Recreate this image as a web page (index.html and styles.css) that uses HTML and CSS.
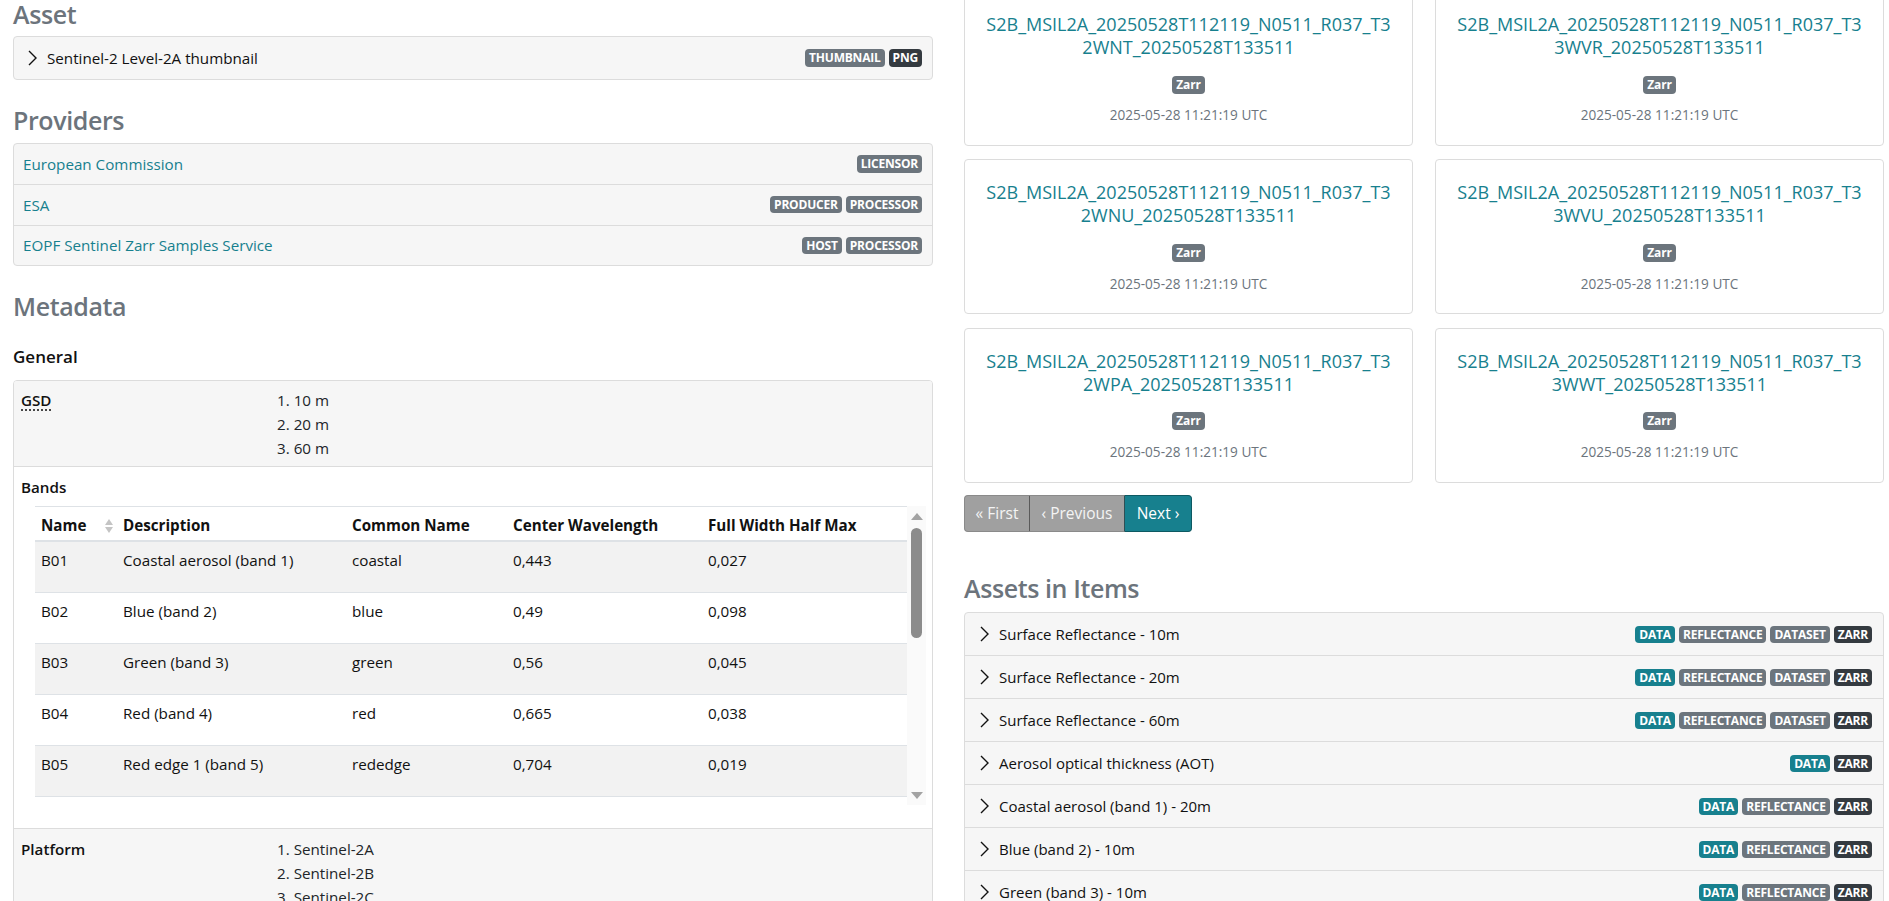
FILE: index.html
```html
<!DOCTYPE html>
<html lang="en">
<head>
<meta charset="utf-8">
<title>Collection</title>
<link rel="stylesheet" href="styles.css">
</head>
<body>
<div class="page">
  <section class="col">
    <h3 class="sec-title first">Asset</h3>
    <div class="list-box">
      <div class="list-row asset-row">
        <svg class="chev" viewBox="0 0 9 16" width="9" height="16"><polyline points="1,1 8,8 1,15" /></svg>
        <span class="row-title">Sentinel-2 Level-2A thumbnail</span>
        <span class="badges"><span class="badge secondary">thumbnail</span><span class="badge dark">png</span></span>
      </div>
    </div>

    <h3 class="sec-title">Providers</h3>
    <div class="list-box">
      <div class="list-row prov-row"><a class="link" href="#">European Commission</a><span class="badges"><span class="badge secondary">licensor</span></span></div>
      <div class="list-row prov-row"><a class="link" href="#">ESA</a><span class="badges"><span class="badge secondary">producer</span><span class="badge secondary">processor</span></span></div>
      <div class="list-row prov-row"><a class="link" href="#">EOPF Sentinel Zarr Samples Service</a><span class="badges"><span class="badge secondary">host</span><span class="badge secondary">processor</span></span></div>
    </div>

    <h3 class="sec-title">Metadata</h3>
    <h4 class="sub-title">General</h4>
    <div class="meta-box">
      <div class="meta-row shade">
        <div class="meta-label"><abbr title="Ground Sample Distance">GSD</abbr></div>
        <ol class="meta-list"><li>10 m</li><li>20 m</li><li>60 m</li></ol>
      </div>
      <div class="meta-row bands">
        <div class="meta-label">Bands</div>
        <div class="table-wrap">
          <div class="table-clip">
            <table class="bands-table">
              <colgroup><col class="c-name"><col class="c-desc"><col class="c-common"><col class="c-center"><col></colgroup>
              <thead>
                <tr><th><span class="th-name">Name</span><span class="sort"><i class="up"></i><i class="down"></i></span></th><th>Description</th><th>Common Name</th><th>Center Wavelength</th><th>Full Width Half Max</th></tr>
              </thead>
              <tbody>
                <tr><td>B01</td><td>Coastal aerosol (band 1)</td><td>coastal</td><td>0,443</td><td>0,027</td></tr>
                <tr><td>B02</td><td>Blue (band 2)</td><td>blue</td><td>0,49</td><td>0,098</td></tr>
                <tr><td>B03</td><td>Green (band 3)</td><td>green</td><td>0,56</td><td>0,045</td></tr>
                <tr><td>B04</td><td>Red (band 4)</td><td>red</td><td>0,665</td><td>0,038</td></tr>
                <tr><td>B05</td><td>Red edge 1 (band 5)</td><td>rededge</td><td>0,704</td><td>0,019</td></tr>
              </tbody>
            </table>
          </div>
          <div class="vscroll" aria-hidden="true">
            <span class="arrow up"></span>
            <span class="track"><span class="thumb"></span></span>
            <span class="arrow down"></span>
          </div>
        </div>
      </div>
      <div class="meta-row shade">
        <div class="meta-label">Platform</div>
        <ol class="meta-list"><li>Sentinel-2A</li><li>Sentinel-2B</li><li>Sentinel-2C</li></ol>
      </div>
    </div>
  </section>

  <section class="col">
    <div class="cards">
      <div class="card"><a class="card-title" href="#">S2B_MSIL2A_20250528T112119_N0511_R037_T3<wbr>2WNT_20250528T133511</a><div class="card-badge"><span class="badge secondary plain">Zarr</span></div><div class="card-date">2025-05-28 11:21:19 UTC</div></div>
      <div class="card"><a class="card-title" href="#">S2B_MSIL2A_20250528T112119_N0511_R037_T3<wbr>3WVR_20250528T133511</a><div class="card-badge"><span class="badge secondary plain">Zarr</span></div><div class="card-date">2025-05-28 11:21:19 UTC</div></div>
      <div class="card"><a class="card-title" href="#">S2B_MSIL2A_20250528T112119_N0511_R037_T3<wbr>2WNU_20250528T133511</a><div class="card-badge"><span class="badge secondary plain">Zarr</span></div><div class="card-date">2025-05-28 11:21:19 UTC</div></div>
      <div class="card"><a class="card-title" href="#">S2B_MSIL2A_20250528T112119_N0511_R037_T3<wbr>3WVU_20250528T133511</a><div class="card-badge"><span class="badge secondary plain">Zarr</span></div><div class="card-date">2025-05-28 11:21:19 UTC</div></div>
      <div class="card"><a class="card-title" href="#">S2B_MSIL2A_20250528T112119_N0511_R037_T3<wbr>2WPA_20250528T133511</a><div class="card-badge"><span class="badge secondary plain">Zarr</span></div><div class="card-date">2025-05-28 11:21:19 UTC</div></div>
      <div class="card"><a class="card-title" href="#">S2B_MSIL2A_20250528T112119_N0511_R037_T3<wbr>3WWT_20250528T133511</a><div class="card-badge"><span class="badge secondary plain">Zarr</span></div><div class="card-date">2025-05-28 11:21:19 UTC</div></div>
    </div>

    <nav class="pager">
      <span class="pg pg-first disabled">« First</span>
      <span class="pg pg-prev disabled">‹ Previous</span>
      <a class="pg pg-next" href="#">Next ›</a>
    </nav>

    <h3 class="sec-title assets-title">Assets in Items</h3>
    <div class="list-box">
      <div class="list-row item-row"><svg class="chev" viewBox="0 0 9 16" width="9" height="16"><polyline points="1,1 8,8 1,15" /></svg><span class="row-title">Surface Reflectance - 10m</span><span class="badges"><span class="badge teal">data</span><span class="badge secondary">reflectance</span><span class="badge secondary">dataset</span><span class="badge dark">zarr</span></span></div>
      <div class="list-row item-row"><svg class="chev" viewBox="0 0 9 16" width="9" height="16"><polyline points="1,1 8,8 1,15" /></svg><span class="row-title">Surface Reflectance - 20m</span><span class="badges"><span class="badge teal">data</span><span class="badge secondary">reflectance</span><span class="badge secondary">dataset</span><span class="badge dark">zarr</span></span></div>
      <div class="list-row item-row"><svg class="chev" viewBox="0 0 9 16" width="9" height="16"><polyline points="1,1 8,8 1,15" /></svg><span class="row-title">Surface Reflectance - 60m</span><span class="badges"><span class="badge teal">data</span><span class="badge secondary">reflectance</span><span class="badge secondary">dataset</span><span class="badge dark">zarr</span></span></div>
      <div class="list-row item-row"><svg class="chev" viewBox="0 0 9 16" width="9" height="16"><polyline points="1,1 8,8 1,15" /></svg><span class="row-title">Aerosol optical thickness (AOT)</span><span class="badges"><span class="badge teal">data</span><span class="badge dark">zarr</span></span></div>
      <div class="list-row item-row"><svg class="chev" viewBox="0 0 9 16" width="9" height="16"><polyline points="1,1 8,8 1,15" /></svg><span class="row-title">Coastal aerosol (band 1) - 20m</span><span class="badges"><span class="badge teal">data</span><span class="badge secondary">reflectance</span><span class="badge dark">zarr</span></span></div>
      <div class="list-row item-row"><svg class="chev" viewBox="0 0 9 16" width="9" height="16"><polyline points="1,1 8,8 1,15" /></svg><span class="row-title">Blue (band 2) - 10m</span><span class="badges"><span class="badge teal">data</span><span class="badge secondary">reflectance</span><span class="badge dark">zarr</span></span></div>
      <div class="list-row item-row"><svg class="chev" viewBox="0 0 9 16" width="9" height="16"><polyline points="1,1 8,8 1,15" /></svg><span class="row-title">Green (band 3) - 10m</span><span class="badges"><span class="badge teal">data</span><span class="badge secondary">reflectance</span><span class="badge dark">zarr</span></span></div>
    </div>
  </section>
</div>
</body>
</html>
```

FILE: styles.css
```css
:root {
  --teal: #17808e;
  --gray: #6c757d;
  --dark: #343a40;
  --border: #dcdcdc;
  --font: "Open Sans", "Noto Sans", "DejaVu Sans", sans-serif;
}

html, body {
  margin: 0;
  padding: 0;
  overflow: hidden;
  background: #fff;
}

body {
  font-family: var(--font);
  font-size: 15.2px;
  line-height: 24px;
  color: #212529;
  height: 901px;
}

.page {
  display: grid;
  grid-template-columns: 1fr 1fr;
  column-gap: 31px;
  padding: 0 5px 0 13px;
  align-items: start;
}

.col {
  min-width: 0;
}

.sec-title {
  font-size: 25px;
  font-weight: 600;
  letter-spacing: -0.4px;
  line-height: 30px;
  color: #6c747c;
  margin: 25px 0 8.7px;
}

.sec-title.first {
  margin-top: -1.5px;
  margin-bottom: 7.5px;
}

.sub-title {
  font-size: 17px;
  font-weight: 600;
  line-height: 20px;
  margin: 26px 0 12.6px;
  color: #111;
}

.link {
  color: var(--teal);
  text-decoration: none;
}

/* list boxes */
.list-box {
  border: 1px solid var(--border);
  border-radius: 4px;
  background: #f6f6f6;
  overflow: hidden;
}

.list-row {
  display: flex;
  align-items: center;
  border-top: 1px solid var(--border);
  padding: 0 10px 0 9px;
}

.list-row:first-child {
  border-top: 0;
}

.asset-row {
  height: 41.5px;
  padding-left: 14px;
}

.prov-row {
  height: 39.67px;
}

.item-row {
  height: 42px;
  padding-left: 15px;
  padding-right: 11px;
  font-size: 15px;
}

.chev {
  flex: none;
  fill: none;
  stroke: #111;
  stroke-width: 1.4;
  margin-right: 10px;
}

.row-title {
  color: #111;
}

.badges {
  margin-left: auto;
  display: flex;
  gap: 4px;
}

.badge {
  display: inline-block;
  font-size: 12px;
  font-weight: 700;
  line-height: 12px;
  padding: 3px 4px 2.5px;
  border-radius: 4px;
  color: #fff;
  text-transform: uppercase;
  letter-spacing: -0.2px;
}

.badge.plain {
  text-transform: none;
}

.badge.secondary { background: var(--gray); }
.badge.dark { background: var(--dark); }
.badge.teal { background: var(--teal); }

/* metadata */
.meta-box {
  border: 1px solid var(--border);
  border-radius: 4px;
  overflow: hidden;
}

.meta-row {
  display: grid;
  grid-template-columns: 256px 1fr;
  padding: 7.4px 6px 6.3px 7px;
  border-top: 1px solid var(--border);
}

.meta-row:first-child {
  border-top: 0;
}

.meta-row.shade {
  background: #f6f6f6;
}

.meta-label {
  font-weight: 600;
  color: #111;
}

abbr {
  text-decoration: underline dotted;
  text-underline-offset: 4px;
}

.meta-list {
  margin: 0;
  padding: 0;
  list-style-position: inside;
}

.meta-row.bands {
  grid-template-columns: 1fr;
  padding-bottom: 23.3px;
}

.table-wrap {
  display: flex;
  margin: 7.3px 0 0 14px;
  height: 299px;
}

.table-clip {
  flex: 1;
  min-width: 0;
  overflow: hidden;
  background: #fff;
}

.vscroll {
  flex: none;
  width: 19px;
  display: flex;
  flex-direction: column;
  background: #fafafa;
}

.arrow {
  flex: none;
  height: 20px;
  display: flex;
  align-items: center;
  justify-content: center;
}

.arrow::before {
  content: "";
  width: 0;
  height: 0;
  border-left: 6px solid transparent;
  border-right: 6px solid transparent;
}

.arrow.up::before { border-bottom: 7px solid #a3a3a3; }
.arrow.down::before { border-top: 7px solid #a3a3a3; }

.track {
  flex: 1;
  padding: 2px 4px 0;
}

.thumb {
  display: block;
  height: 110px;
  border-radius: 6px;
  background: #8c8c8c;
}

.bands-table {
  width: 100%;
  border-collapse: collapse;
  table-layout: fixed;
  background: #fff;
  border-bottom: 1px solid #dee2e6;
}

.c-name { width: 82px; }
.c-desc { width: 229px; }
.c-common { width: 161px; }
.c-center { width: 195px; }

.bands-table th {
  text-align: left;
  font-weight: 700;
  padding: 6px 6px 3px;
  border-top: 1px solid #dee2e6;
  border-bottom: 2px solid #dee2e6;
  white-space: nowrap;
  color: #111;
}

.th-name {
  display: inline-block;
  width: 64px;
}

.sort {
  display: inline-flex;
  flex-direction: column;
  gap: 2px;
  vertical-align: middle;
  position: relative;
  top: -1px;
}

.sort i {
  display: block;
  width: 0;
  height: 0;
  border-left: 4px solid transparent;
  border-right: 4px solid transparent;
}

.sort .up { border-bottom: 6px solid #c4c4c4; }
.sort .down { border-top: 6px solid #c4c4c4; }

.bands-table td {
  padding: 6px 6px 20px;
  border-top: 1px solid #dee2e6;
  vertical-align: top;
  color: #111;
}

.bands-table tbody tr:nth-child(odd) {
  background: #f2f2f2;
}

/* cards */
.cards {
  display: grid;
  grid-template-columns: 1fr 1fr;
  column-gap: 22px;
  row-gap: 13.4px;
  margin-top: -9px;
}

.card {
  height: 155px;
  box-sizing: border-box;
  border: 1px solid var(--border);
  border-radius: 4px;
  padding: 21px 14px 0;
  text-align: center;
  background: #fff;
}

.card-title {
  display: block;
  font-size: 18px;
  font-weight: 500;
  line-height: 23px;
  color: var(--teal);
  text-decoration: none;
}

.card-badge {
  margin-top: 14.7px;
  line-height: 18px;
  height: 18px;
}

.card-badge .badge {
  font-size: 12px;
  line-height: 12px;
  padding: 3px 4px;
}

.card-date {
  margin-top: 12.5px;
  font-size: 13.6px;
  line-height: 21px;
  color: var(--gray);
}

/* pagination */
.pager {
  display: flex;
  margin-top: 12.7px;
}

.pg {
  display: block;
  box-sizing: border-box;
  height: 37px;
  line-height: 35px;
  text-align: center;
  font-size: 15.5px;
  color: #fff;
  text-decoration: none;
  border: 1px solid #5f5f5f;
}

.pg.disabled {
  background: #a0a0a0;
  color: #f4f4f4;
}

.pg-first {
  width: 66px;
  border-radius: 4px 0 0 4px;
  border-color: #8a8a8a #5a5a5a #8a8a8a #8a8a8a;
}

.pg-prev {
  width: 95px;
  border-left: 0;
  border-color: #8a8a8a #2f4f55 #8a8a8a #5a5a5a;
}

.pg-next {
  width: 67px;
  border-left: 0;
  background: var(--teal);
  border-color: #0d5962;
  border-radius: 0 4px 4px 0;
}

.assets-title {
  margin-top: 40.7px;
  margin-bottom: 9.3px;
}
```
